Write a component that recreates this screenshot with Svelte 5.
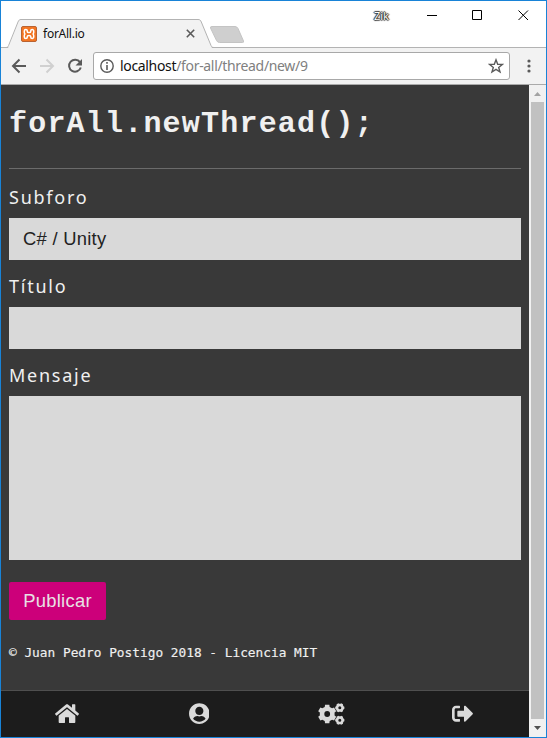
<script>
  // Outline of a toothed wheel with a round hole (even-odd fill).
  function gear(cx, cy, outer, inner, hole, teeth, turn = 0) {
    const step = (Math.PI * 2) / teeth;
    const pt = (r, a) => `${(cx + r * Math.cos(a)).toFixed(2)} ${(cy + r * Math.sin(a)).toFixed(2)}`;
    let d = '';
    for (let i = 0; i < teeth; i++) {
      const a = i * step + turn;
      d += `${i ? 'L' : 'M'}${pt(inner, a - step * 0.32)}L${pt(outer, a - step * 0.22)}L${pt(outer, a + step * 0.22)}L${pt(inner, a + step * 0.32)}`;
    }
    return `${d}ZM${cx - hole} ${cy}a${hole} ${hole} 0 1 0 ${hole * 2} 0a${hole} ${hole} 0 1 0 ${-hole * 2} 0Z`;
  }
  const cogs =
    gear(9.2, 11, 9.4, 7.5, 2.9, 6, Math.PI / 6) +
    gear(21.8, 4.8, 4.7, 4.1, 1.5, 6) +
    gear(21.8, 17.2, 4.7, 4.1, 1.5, 6);

  const nav = [
    { name: 'Inicio', w: 24, h: 21.3, box: '0 0 576 512', d: 'M488 312.7V456c0 13.3-10.7 24-24 24H348c-6.6 0-12-5.4-12-12V356c0-6.6-5.4-12-12-12h-72c-6.6 0-12 5.4-12 12v112c0 6.6-5.4 12-12 12H112c-13.3 0-24-10.7-24-24V312.7c0-3.6 1.6-7 4.4-9.3l188-154.8c4.4-3.6 10.8-3.6 15.3 0l188 154.8c2.7 2.3 4.3 5.7 4.3 9.3zm83.6-60.9L488 182.9V44.4c0-6.6-5.4-12-12-12h-56c-6.6 0-12 5.4-12 12V117l-89.5-73.7c-17.7-14.6-43.3-14.6-61 0L4.4 251.8c-5.1 4.2-5.8 11.8-1.6 16.9l25.5 31c4.2 5.1 11.8 5.8 16.9 1.6l235.2-193.7c4.4-3.6 10.8-3.6 15.3 0l235.2 193.7c5.1 4.2 12.7 3.5 16.9-1.6l25.5-31c4.2-5.2 3.4-12.7-1.7-16.9z' },
    { name: 'Perfil', w: 20.7, h: 21.3, box: '0 0 496 512', d: 'M248 8C111 8 0 119 0 256s111 248 248 248 248-111 248-248S385 8 248 8zm0 84c54 0 98 44 98 98s-44 98-98 98-98-44-98-98 44-98 98-98zm0 356c-58.700 0-115-26.600-150-68.200 14-38 59-65.800 102-65.800 2.400 0 4.800.4 7.100 1.100 13 4.200 26.600 6.900 40.900 6.900 14.300 0 28-2.700 40.900-6.900 2.300-.7 4.700-1.100 7.100-1.100 42.900 0 88 27.800 102 65.800C363 421.400 306.700 448 248 448z' },
    { name: 'Ajustes', w: 27, h: 22, box: '0 0 27 22', d: cogs },
    { name: 'Salir', w: 21.3, h: 21.3, box: '0 0 512 512', d: 'M497 273L329 441c-15 15-41 4.5-41-17v-96H152c-13.3 0-24-10.7-24-24v-96c0-13.3 10.7-24 24-24h136V88c0-21.4 25.9-32 41-17l168 168c9.3 9.4 9.3 24.6 0 34zM192 436v-40c0-6.6-5.4-12-12-12H96c-17.7 0-32-14.3-32-32V160c0-17.7 14.3-32 32-32h84c6.6 0 12-5.4 12-12V76c0-6.6-5.4-12-12-12H96c-53 0-96 43-96 96v192c0 53 43 96 96 96h84c6.6 0 12-5.4 12-12z' }
  ];
</script>

<div class="window">
  <header class="strip">
    <svg class="tabs" width="250" height="30" viewBox="0 0 250 30">
      <path d="M0 29.5H5C7 29.5 7.5 28.5 8 27L17.5 3C18.2 1.2 18.8.5 20.5.5H197C199 .5 199.5 1.2 200.3 3L210 27C210.8 29 211.3 29.5 213 29.5V30H0Z" fill="#f2f2f2" />
      <path d="M0 28.5H5C6.4 28.5 7 28 7.6 26.5L17 3C17.8 1.2 18.3.5 20 .5H197C199 .5 199.5 1.2 200.300 3L210 26.500C210.700 28 211.200 28.500 213 28.500H250" fill="none" stroke="#b3b3b3" />
      <path d="M211 7.500H234Q236 7.500 237 9.500L242.500 22Q243 23.500 241.500 23.500H218.500Q216.500 23.500 215.500 21.500L209.500 9Q209 7.500 211 7.500Z" fill="#cfcfcf" stroke="#c4c4c4" />
    </svg>
    <div class="tab">
      <svg class="favicon" width="16" height="16" viewBox="0 0 16 16">
        <rect x=".5" y=".5" width="15" height="15" rx="1.500" fill="#f37623" stroke="#b96332" />
        <path d="M6.300 6V5A1.500 1.500 0 0 0 3.300 5V6.500Q3.300 8 4.500 8Q3.300 8 3.300 9.500V11A1.500 1.500 0 0 0 6.300 11V10.300Q6.300 9.500 8 9.500T9.700 10.300V11A1.500 1.500 0 0 0 12.700 11V9.500Q12.700 8 11.500 8Q12.700 8 12.700 6.500V5A1.500 1.500 0 0 0 9.700 5V5.700Q9.700 6.500 8 6.500T6.300 5.700" fill="none" stroke="#fff" stroke-width="1.500" />
      </svg>
      <span class="tab-title">forAll.io</span>
      <svg width="9" height="9" viewBox="0 0 9 9"><path d="M.8.8 8.200 8.200M8.200.8.8 8.200" stroke="#5a5a5a" stroke-width="1.600" /></svg>
    </div>
    <div class="controls">
      <span class="user">Zik</span>
      <svg width="102" height="12" viewBox="0 0 102 12" fill="none" stroke="#000">
        <path d="M0 5.500H10M45.500 .500h9v9h-9ZM91.500.500 101 10M101 .500 91.500 10" />
      </svg>
    </div>
  </header>

  <div class="toolbar">
    <svg class="back" width="16" height="16" viewBox="0 0 16 16"><path d="M15 8H2.500M8.500 1.500 2 8l6.500 6.500" fill="none" stroke="#5a5a5a" stroke-width="2" /></svg>
    <svg class="forward" width="16" height="16" viewBox="0 0 16 16"><path d="M1 8H13.500M7.500 1.500 14 8l-6.500 6.500" fill="none" stroke="#d0d0d0" stroke-width="2" /></svg>
    <svg class="reload" width="16" height="16" viewBox="0 0 16 16"><path d="M13 4.200A6 6 0 1 0 13.800 9.500" fill="none" stroke="#5a5a5a" stroke-width="2" /><path d="M15 1v6.500H8.500Z" fill="#5a5a5a" /></svg>
    <div class="address">
      <svg width="14" height="14" viewBox="0 0 14 14"><circle cx="7" cy="7" r="6.200" fill="none" stroke="#5a5a5a" stroke-width="1.400" /><path d="M7 3v1.700M7 6v5" stroke="#5a5a5a" stroke-width="1.600" /></svg>
      <span class="url">localhost<span>/for-all/thread/new/9</span></span>
      <svg width="16" height="16" viewBox="0 0 16 16"><path d="M8 1.800 9.700 6.200 14.500 6.400 10.700 9.400 12 14 8 11.400 4 14 5.300 9.400 1.500 6.400 6.300 6.200Z" fill="none" stroke="#5a5a5a" stroke-width="1.400" /></svg>
    </div>
    <svg class="more" width="4" height="14" viewBox="0 0 4 14" fill="#5a5a5a"><circle cx="2" cy="2" r="1.600" /><circle cx="2" cy="7" r="1.600" /><circle cx="2" cy="12" r="1.600" /></svg>
  </div>

  <div class="viewport">
    <div class="page">
      <main>
        <h1>forAll.newThread();</h1>
        <hr />
        <label for="sub">Subforo</label>
        <div class="field" id="sub">C# / Unity</div>
        <label for="title">Título</label>
        <input class="field" id="title" />
        <label for="message">Mensaje</label>
        <textarea class="field" id="message"></textarea>
        <button>Publicar</button>
        <footer>© Juan Pedro Postigo 2018 - Licencia MIT</footer>
      </main>
      <nav>
        {#each nav as item}
          <a href="#top" aria-label={item.name}>
            <svg width={item.w} height={item.h} viewBox={item.box} fill="#dadada" fill-rule="evenodd"><path d={item.d} /></svg>
          </a>
        {/each}
      </nav>
    </div>
    <div class="scrollbar">
      <svg width="17" height="17" viewBox="0 0 17 17"><path d="M5 11 8.500 7 12 11Z" fill="#a3a3a3" /></svg>
      <div class="thumb"></div>
      <svg width="17" height="18" viewBox="0 0 17 18"><path d="M5 7H12L8.500 11Z" fill="#505050" /></svg>
    </div>
  </div>
</div>

<style>
  * { box-sizing: border-box; }
  svg { display: block; flex: none; }
  .window { width: 547px; height: 738px; border: 1px solid #1883d7; display: flex; flex-direction: column; background: #fff; overflow: hidden; }
  .strip { height: 47px; flex: none; position: relative; display: flex; justify-content: space-between; border-bottom: 1px solid #b3b3b3; }
  .tabs { position: absolute; left: 0; top: 18px; }
  .tab { position: relative; display: flex; align-items: center; width: 194px; height: 21px; margin-top: 22px; padding-left: 20px; }
  .tab-title { flex: 1; margin-left: 6px; font: 12px "Noto Sans", sans-serif; letter-spacing: -0.25px; color: #111; }
  .controls { display: flex; align-items: flex-start; padding: 9px 17px 0 0; }
  .controls svg { margin-left: 38px; }
  .user { margin-top: -1px; font: 11px/13px "Noto Sans", sans-serif; color: #fff; text-shadow: 0 0 1px #000, 1px 0 1px #444, -1px 0 1px #444, 0 1px 1px #444, 0 -1px 1px #444; }
  .toolbar { height: 37px; flex: none; display: flex; align-items: center; background: #f2f2f2; border-bottom: 1px solid #aaa; padding: 0 15px 0 10px; }
  .forward { margin-left: 12px; }
  .reload { margin-left: 12px; }
  .address { margin-left: 10px; margin-right: 17px; flex: 1; height: 28px; border: 1px solid #a8a8a8; border-radius: 3px; background: #fff; display: flex; align-items: center; padding: 0 5px 0 6px; }
  .url { flex: 1; margin-left: 6px; font: 14px/20px "Noto Sans", sans-serif; letter-spacing: -0.33px; color: #111; }
  .url span { color: #808080; }
  .viewport { flex: 1; display: flex; min-height: 0; }
  .page { flex: 1; display: flex; flex-direction: column; background: #393939; }
  main { flex: 1; padding: 20px 8px 0; }
  h1 { margin: 0; font: bold 30px/38px "Courier New", "Liberation Mono", monospace; letter-spacing: 1.2px; color: #f0f0f0; height: 63px; }
  hr { margin: 0; border: 0; height: 1px; background: #6b6b6b; }
  label { display: block; font: 18px/25px "Noto Sans", sans-serif; letter-spacing: 1.75px; color: #f0f0f0; margin: 16px 0 8px; }
  .field + label { margin-top: 14px; }
  .field { display: block; width: 100%; height: 42px; border: 0; border-radius: 0; background: #d9d9d9; color: #222; padding: 0 14px; font: 18.400px/41px "Liberation Sans", Arial, sans-serif; letter-spacing: .27px; resize: none; }
  textarea.field { height: 164px; }
  button { display: block; margin-top: 22px; width: 97px; height: 38px; padding: 0; border: 0; border-radius: 2px; background: #cc007a; color: #e8e0e4; font: 18.400px "Liberation Sans", Arial, sans-serif; letter-spacing: .27px; }
  footer { margin-top: 23px; font: 12.800px/20px Consolas, "DejaVu Sans Mono", monospace; color: #f0f0f0; -webkit-text-stroke: .15px #f0f0f0; }
  nav { height: 47px; flex: none; display: flex; background: #1c1c1c; border-top: 1px solid #4f4f4f; }
  nav a { flex: 1; display: flex; align-items: center; justify-content: center; }
  .scrollbar { width: 17px; background: #f1f1f1; display: flex; flex-direction: column; }
  .thumb { flex: 1; margin: 0 2px; background: #c1c1c1; }
</style>
